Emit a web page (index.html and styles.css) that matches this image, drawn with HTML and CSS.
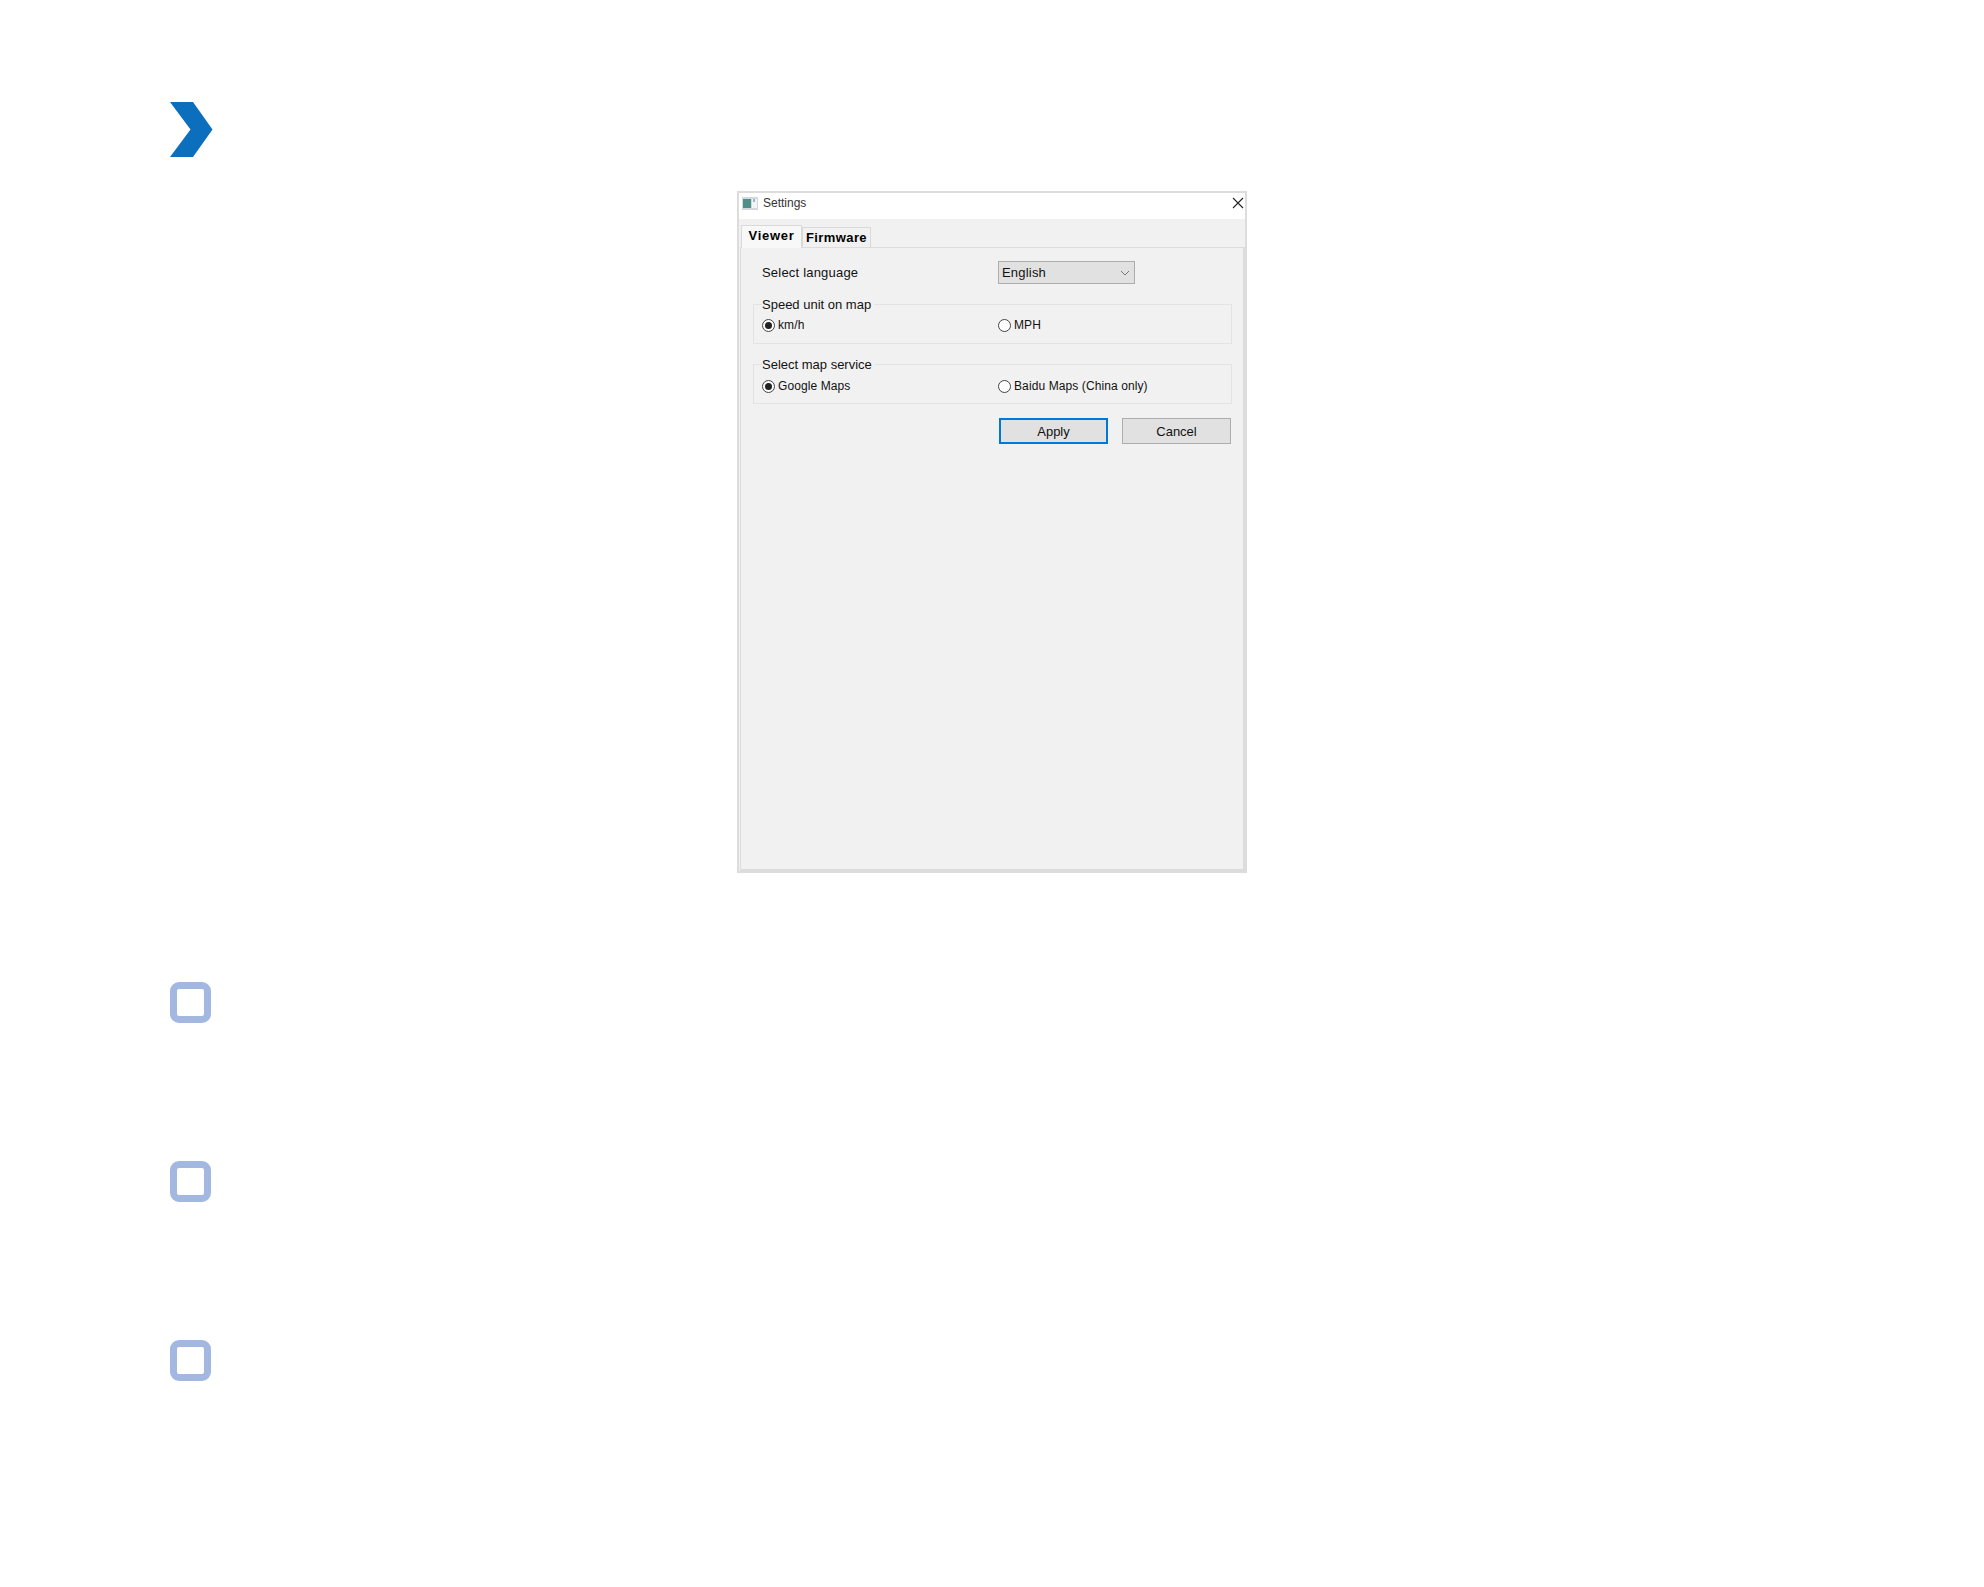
FILE: index.html
```html
<!DOCTYPE html>
<html lang="en">
<head>
  <meta charset="UTF-8">
  <title>Settings</title>
  <link rel="stylesheet" href="styles.css">
</head>
<body>
<svg class="chevron" width="43" height="55" viewBox="0 0 43 55"><path d="M0 0H23L42.500 27.500L23 55H0L20.500 27.500Z" fill="#0b6fbd"/></svg>

<div class="window">
  <div class="title-bar">
    <svg class="title-icon" width="16" height="13" viewBox="0 0 16 13">
      <rect width="16" height="13" fill="#d4d8dc"/>
      <rect x="1" y="2" width="8" height="9" fill="#4f8f8a"/>
      <rect x="10" y="2" width="5" height="9" fill="#f2f4f6"/>
      <rect x="11" y="2" width="2" height="3" fill="#9fb4c8"/>
    </svg>
    <span class="title-text">Settings</span>
    <svg class="close-icon" width="12" height="12" viewBox="0 0 12 12"><path d="M1 1L11 11M11 1L1 11" stroke="#222" stroke-width="1.100" fill="none"/></svg>
  </div>
  <div class="tabs">
    <div class="tab tab-active">Viewer</div>
    <div class="tab">Firmware</div>
  </div>
  <div class="panel">
    <div class="lang-row">
      <span class="lang-label">Select language</span>
      <div class="select">
        <span>English</span>
        <svg width="10" height="6" viewBox="0 0 10 6"><path d="M1 1L5 5L9 1" stroke="#777" fill="none"/></svg>
      </div>
    </div>
    <fieldset class="group">
      <legend>Speed unit on map</legend>
      <div class="radio-row">
        <label class="radio-item"><span class="radio checked"></span>km/h</label>
        <label class="radio-item"><span class="radio"></span>MPH</label>
      </div>
    </fieldset>
    <fieldset class="group">
      <legend>Select map service</legend>
      <div class="radio-row">
        <label class="radio-item"><span class="radio checked"></span>Google Maps</label>
        <label class="radio-item"><span class="radio"></span>Baidu Maps (China only)</label>
      </div>
    </fieldset>
    <div class="buttons">
      <div class="btn btn-default">Apply</div>
      <div class="btn">Cancel</div>
    </div>
  </div>
</div>

<div class="checks">
  <div class="check"></div>
  <div class="check"></div>
  <div class="check"></div>
</div>
</body>
</html>
```

FILE: styles.css
```css
body {
  margin: 0;
  padding: 102px 0 0 170px;
  height: 1587px;
  box-sizing: border-box;
  background: #fff;
  font-family: "Liberation Sans", Arial, sans-serif;
  color: #111;
  overflow: hidden;
}
.chevron {
  display: block;
}
.window {
  width: 510px;
  height: 682px;
  margin: 34px 0 0 567px;
  box-sizing: border-box;
  border: 2px solid #dcdcdc;
  background: #f1f1f1;
  display: flex;
  flex-direction: column;
}
.title-bar {
  height: 26px;
  flex: none;
  box-sizing: border-box;
  background: #fff;
  display: flex;
  align-items: center;
  padding: 0 1px 6px 3px;
}
.title-icon {
  margin-right: 5px;
}
.title-text {
  font-size: 12px;
  color: #333;
  flex-grow: 1;
}
.close-icon {
  display: block;
}
.tabs {
  height: 28px;
  flex: none;
  display: flex;
  align-items: flex-end;
  padding-left: 2px;
}
.tab {
  height: 20px;
  width: 69px;
  box-sizing: border-box;
  border: 1px solid #d9d9d9;
  border-bottom: 0;
  font-size: 13px;
  font-weight: bold;
  letter-spacing: .4px;
  line-height: 20px;
  text-align: center;
  color: #000;
}
.tab-active {
  width: 61px;
  height: 23px;
  line-height: 19px;
  letter-spacing: .7px;
  background: #f8f8f8;
  position: relative;
  margin-bottom: -1px;
  z-index: 1;
}
.panel {
  flex-grow: 1;
  margin-left: 1px;
  border: 2px solid #dcdcdc;
  border-top-width: 1px;
  border-left-width: 1px;
  padding: 13px 11px 0 12px;
}
.lang-row {
  display: flex;
  align-items: center;
  height: 23px;
  padding-left: 9px;
  font-size: 13px;
}
.lang-label {
  width: 236px;
  letter-spacing: .2px;
}
.select {
  width: 137px;
  height: 23px;
  box-sizing: border-box;
  border: 1px solid #adadad;
  background: #e1e1e1;
  display: flex;
  align-items: center;
  justify-content: space-between;
  padding: 0 4px 0 3px;
  letter-spacing: .2px;
}
.group {
  margin: 13px 0 0;
  padding: 0 0 0 8px;
  height: 47px;
  box-sizing: border-box;
  border: 1px solid #e3e3e3;
  min-width: 0;
}
.group legend {
  font-size: 13px;
  padding: 0 3px 0 0;
  margin-left: 0;
  line-height: 15px;
}
.radio-row {
  display: flex;
  height: 26px;
  align-items: center;
}
.group + .group .radio-row {
  margin-top: 1px;
}
.radio-item {
  display: flex;
  flex: none;
  align-items: center;
  font-size: 12px;
  letter-spacing: .1px;
  width: 236px;
}
.radio {
  width: 13px;
  height: 13px;
  box-sizing: border-box;
  border: 1px solid #444;
  border-radius: 50%;
  background: #fff;
  margin-right: 3px;
  display: flex;
  align-items: center;
  justify-content: center;
}
.radio.checked::after {
  content: '';
  width: 7px;
  height: 7px;
  border-radius: 50%;
  background: #222;
}
.buttons {
  display: flex;
  justify-content: flex-end;
  gap: 14px;
  margin-top: 14px;
  margin-right: 1px;
}
.btn {
  width: 109px;
  height: 26px;
  box-sizing: border-box;
  border: 1px solid #adadad;
  background: #e1e1e1;
  font-size: 13px;
  line-height: 25px;
  text-align: center;
  color: #111;
}
.btn-default {
  border: 2px solid #0078d7;
  line-height: 23px;
}
.checks {
  display: flex;
  flex-direction: column;
  gap: 138px;
  margin-top: 109px;
}
.check {
  width: 41px;
  height: 41px;
  box-sizing: border-box;
  border: 7px solid #a3b8e0;
  border-radius: 9px;
}
```
